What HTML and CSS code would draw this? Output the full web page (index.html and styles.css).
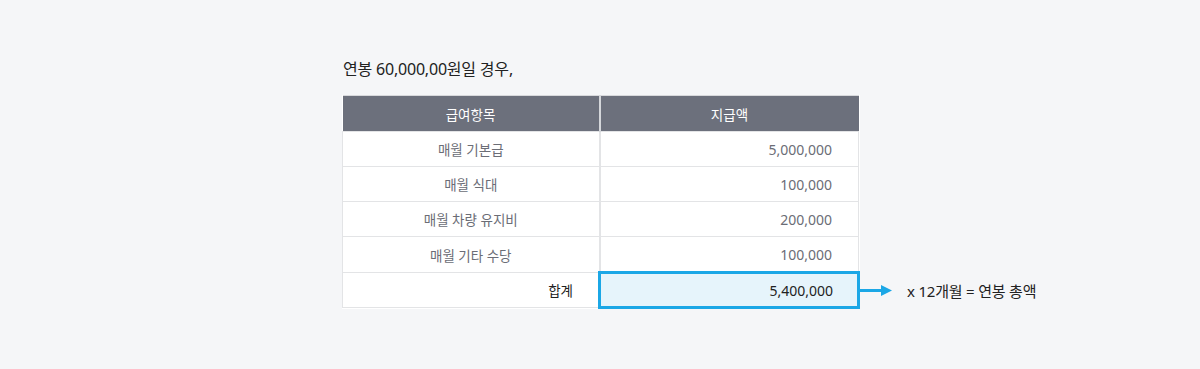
FILE: index.html
```html
<!DOCTYPE html>
<html lang="ko">
<head>
<meta charset="utf-8">
<link rel="stylesheet" href="styles.css">
</head>
<body>
<div class="wrap">
  <p class="title">연봉 60,000,00원일 경우,</p>
  <table class="pay">
    <thead>
      <tr><th class="c1">급여항목</th><th class="c2">지급액</th></tr>
    </thead>
    <tbody>
      <tr><td class="item">매월 기본급</td><td class="amt">5,000,000</td></tr>
      <tr><td class="item">매월 식대</td><td class="amt">100,000</td></tr>
      <tr><td class="item">매월 차량 유지비</td><td class="amt">200,000</td></tr>
      <tr><td class="item">매월 기타 수당</td><td class="amt">100,000</td></tr>
      <tr class="sum"><td class="sum-label">합계</td><td class="sum-amt"><span>5,400,000</span>
        <div class="note">
          <svg class="arrow" width="36" height="12" viewBox="0 0 36 12"><rect x="0" y="4.5" width="26" height="3" fill="#1ba7e6"/><path d="M24 0.5 L35 6 L24 11.5 Z" fill="#1ba7e6"/></svg>
          <span class="note-text">x 12개월 = 연봉 총액</span>
        </div>
      </td></tr>
    </tbody>
  </table>
</div>
</body>
</html>
```
FILE: styles.css
```css
html, body {
  margin: 0;
  padding: 0;
  background: #f5f6f8;
  font-family: "Noto Sans", "Noto Sans CJK KR", sans-serif;
}
.wrap {
  width: 518px;
  margin-left: calc(50% - 258px);
  padding-top: 57px;
}
.title {
  margin: 0 0 0 1px;
  height: 38px;
  font-size: 16px;
  line-height: 24px;
  color: #222;
  letter-spacing: -0.2px;
}
.pay {
  width: 518px;
  border-collapse: collapse;
  table-layout: fixed;
  background: #fff;
  font-size: 13.5px;
}
.pay th {
  height: 35px;
  padding: 0;
  background: #6c707c;
  color: #fff;
  font-weight: 400;
  border-top: 1px solid #d8d9dc;
}
.pay th.c1 { width: 256px; border-right: 2px solid #d4d6da; }
.pay td {
  height: 34px;
  padding: 0;
  border: 1px solid #e3e4e6;
  color: #6b6d76;
}
.pay td.item { text-align: center; border-left: 1px solid #e3e4e6; border-right: 2px solid #e3e4e6; }
.pay td.amt { text-align: right; padding-right: 26px; font-size: 14px; }
.pay tr.sum td { height: 32px; }
.sum-label {
  text-align: right;
  padding-right: 25px !important;
  color: #222 !important;
}
.pay td.sum-amt {
  position: relative;
  border: 3px solid #1ba7e6;
  background: #e6f4fb;
  text-align: right;
  padding-right: 24px;
  color: #222;
  font-size: 14px;
}
.note {
  position: absolute;
  left: 100%;
  top: 50%;
  margin-left: 3px;
  transform: translateY(-50%);
  display: flex;
  align-items: center;
  white-space: nowrap;
}
.arrow { display: block; margin-left: -3px; }
.note-text {
  margin-left: 14px;
  font-size: 15px;
  color: #222;
  letter-spacing: -0.2px;
}
```
